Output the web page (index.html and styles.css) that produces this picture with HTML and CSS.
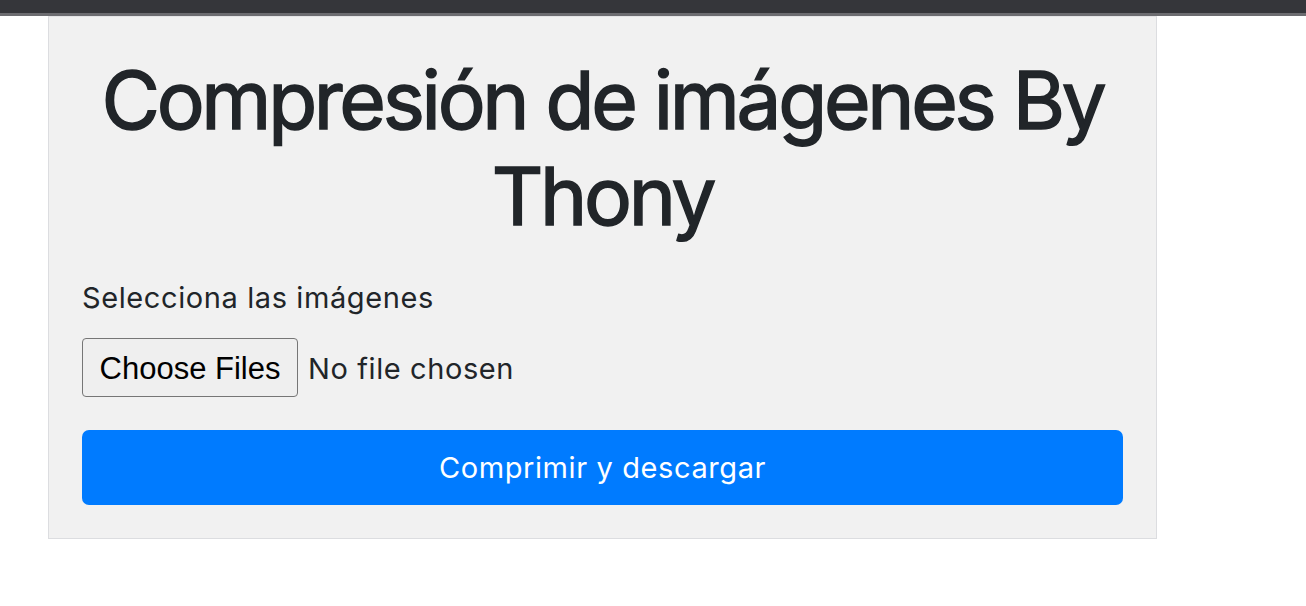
FILE: index.html
```html
<!DOCTYPE html>
<html lang="es">
<head>
<meta charset="utf-8">
<title>Compresión de imágenes</title>
<link rel="stylesheet" href="styles.css">
</head>
<body>
<div class="topbar"></div>
<main class="card">
  <h1 class="title">Compresión de imágenes By Thony</h1>
  <form class="form">
    <label class="label">Selecciona las imágenes</label>
    <div class="file">
      <span class="file-btn">Choose Files</span>
      <span class="file-name">No file chosen</span>
    </div>
    <button type="button" class="submit">Comprimir y descargar</button>
  </form>
</main>
</body>
</html>
```

FILE: styles.css
```css
html, body {
  margin: 0;
  padding: 0;
  background: #ffffff;
}
body {
  font-family: Inter, "Liberation Sans", sans-serif;
  color: #212529;
}
.topbar {
  height: 13px;
  background: #35363a;
  border-bottom: 3px solid #6c6c70;
}
.card {
  box-sizing: border-box;
  width: 1109px;
  margin-left: 48px;
  background: #f1f1f1;
  border: 1px solid #dcdde0;
  border-top-color: #e4e4e6;
  padding: 33px;
}
.title {
  margin: 2px 0 33px;
  font-size: 80px;
  line-height: 96px;
  font-weight: 400;
  -webkit-text-stroke: 1.5px #212529;
  text-align: center;
  color: #212529;
  letter-spacing: -3.3px;
}
.form {
  display: flex;
  flex-direction: column;
}
.label {
  font-size: 29px;
  line-height: 42px;
  letter-spacing: 0.6px;
  margin-bottom: 19px;
}
.file {
  display: flex;
  align-items: center;
  gap: 10px;
  margin-bottom: 33px;
}
.file-btn {
  box-sizing: border-box;
  height: 59px;
  width: 216px;
  display: flex;
  align-items: center;
  justify-content: center;
  padding-top: 2px;
  background: #efefef;
  border: 1px solid #767676;
  border-radius: 4px;
  font-family: "Liberation Sans", Arial, sans-serif;
  font-size: 31px;
  color: #000;
}
.file-name {
  font-size: 29px;
  letter-spacing: 0.6px;
  padding-top: 2px;
  color: #212529;
}
.submit {
  height: 75px;
  width: 100%;
  border: none;
  border-radius: 7px;
  background: #007bff;
  color: #ffffff;
  font-family: Inter, "Liberation Sans", sans-serif;
  font-size: 29px;
  letter-spacing: 0.6px;
  padding: 0;
}
```
